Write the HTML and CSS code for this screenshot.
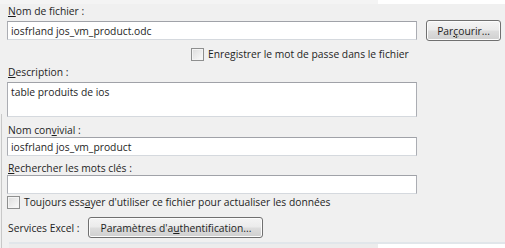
FILE: index.html
```html
<!DOCTYPE html>
<html lang="fr">

<head>
    <meta charset="UTF-8">
    <title>Propriétés de la connexion</title>
    <link rel="stylesheet" href="styles.css">
</head>

<body>
    <div class="top-strip"><span class="top-left"></span></div>

    <div id="definition">
        <label class="field-label" for="fileName"><u>N</u>om de fichier :</label>
        <div class="file-row">
            <input class="text-box" type="text" id="fileName" value="iosfrland jos_vm_product.odc">
            <button class="win-button browse" type="button">Par<u>ç</u>ourir...</button>
        </div>

        <div class="check-row save-password">
            <span class="check-box"></span>
            <span>Enre<u>g</u>istrer le mot de passe dans le fichier</span>
        </div>

        <label class="field-label desc-label" for="description"><u>D</u>escription :</label>
        <textarea class="text-box description" id="description">table produits de ios</textarea>

        <label class="field-label name-label" for="friendlyName">Nom con<u>v</u>ivial :</label>
        <input class="text-box" type="text" id="friendlyName" value="iosfrland jos_vm_product">

        <label class="field-label keys-label" for="keywords"><u>R</u>echercher les mots clés :</label>
        <input class="text-box" type="text" id="keywords" value="">

        <div class="check-row always-use">
            <span class="check-box"></span>
            <span>Toujours ess<u>a</u>yer d'utiliser ce fichier pour actualiser les données</span>
        </div>

        <div class="excel-row">
            <span>Services Excel :</span>
            <button class="win-button auth" type="button">Paramètres d'a<u>u</u>thentification...</button>
        </div>
    </div>

    <div class="bottom-strip"><span class="bottom-left"></span></div>
</body>

</html>
```

FILE: styles.css
```css
body {
    margin: 0;
    width: 505px;
    height: 248px;
    overflow: hidden;
    position: relative;
    background-color: #f0f0f0; /* dialog gray */
    font-family: "Open Sans", "Noto Sans", sans-serif;
    font-size: 10.3px;
    color: #1e1e1e;
}

/* thin left edge of the dialog frame */
body::before {
    content: "";
    position: absolute;
    left: 1px;
    top: 114px;
    bottom: 0;
    width: 1px;
    background-color: #c8c8c8;
}

.top-strip {
    height: 4px;
    background-color: #ffffff;
    display: flex;
}

.top-left {
    width: 378px;
    background-color: #f4f4f4;
}

#definition {
    display: flex;
    flex-direction: column;
    align-items: flex-start;
    padding-left: 7px;
}

.field-label {
    display: block;
    line-height: 14px;
    height: 14px;
    margin-left: 1px;
}

.desc-label {
    margin-top: 4px;
}

.name-label {
    margin-top: 6px;
}

.keys-label {
    margin-top: 5px;
}

u {
    text-decoration-thickness: 1px;
    text-underline-offset: 1px;
}

.text-box {
    box-sizing: border-box;
    width: 410px;
    height: 19px;
    margin: 0;
    padding: 0 3px;
    border: 1px solid #abadb3;
    border-top-color: #a0a2a8;
    border-bottom-color: #d5d9de;
    background-color: #ffffff;
    font-family: inherit;
    font-size: inherit;
    color: #1e1e1e;
    outline: none;
}

.file-row {
    display: flex;
    align-items: flex-start;
    gap: 9px;
    margin-top: 2px;
}

.file-row .text-box {
    margin-top: 1px;
}

.win-button {
    box-sizing: border-box;
    height: 21px;
    padding: 0;
    border: 1px solid #707070;
    border-radius: 3px;
    background: linear-gradient(#f4f4f4 0%, #ebebeb 48%, #dddddd 52%, #cfcfcf 100%);
    box-shadow: inset 0 0 0 1px #fcfcfc;
    font-family: inherit;
    font-size: inherit;
    color: #1e1e1e;
}

.browse {
    width: 75px;
}

.check-row {
    display: flex;
    align-items: center;
    gap: 4px;
    height: 14px;
    line-height: 14px;
}

.save-password {
    margin: 6px 0 0 184px;
}

.always-use {
    margin-top: 1px;
}

.check-box {
    box-sizing: border-box;
    width: 13px;
    height: 13px;
    border: 1px solid #8e8f8f;
    background: linear-gradient(135deg, #dcdcdc, #fbfbfb);
    box-shadow: inset 0 0 0 1px #f4f4f4;
}

.description {
    height: 35px;
    margin-top: 3px;
    resize: none;
    padding: 2px 3px;
    line-height: 14px;
    overflow: hidden;
}

.excel-row {
    display: flex;
    align-items: center;
    gap: 9px;
    margin: 8px 0 0 1px;
}

.auth {
    width: 175px;
}

.bottom-strip {
    margin: 4px 0 0 9px;
    border-top: 2px solid #e1e6ea;
    height: 8px;
    background-color: #ffffff;
    display: flex;
}

.bottom-left {
    width: 369px;
    background-color: #ececec;
}
```
